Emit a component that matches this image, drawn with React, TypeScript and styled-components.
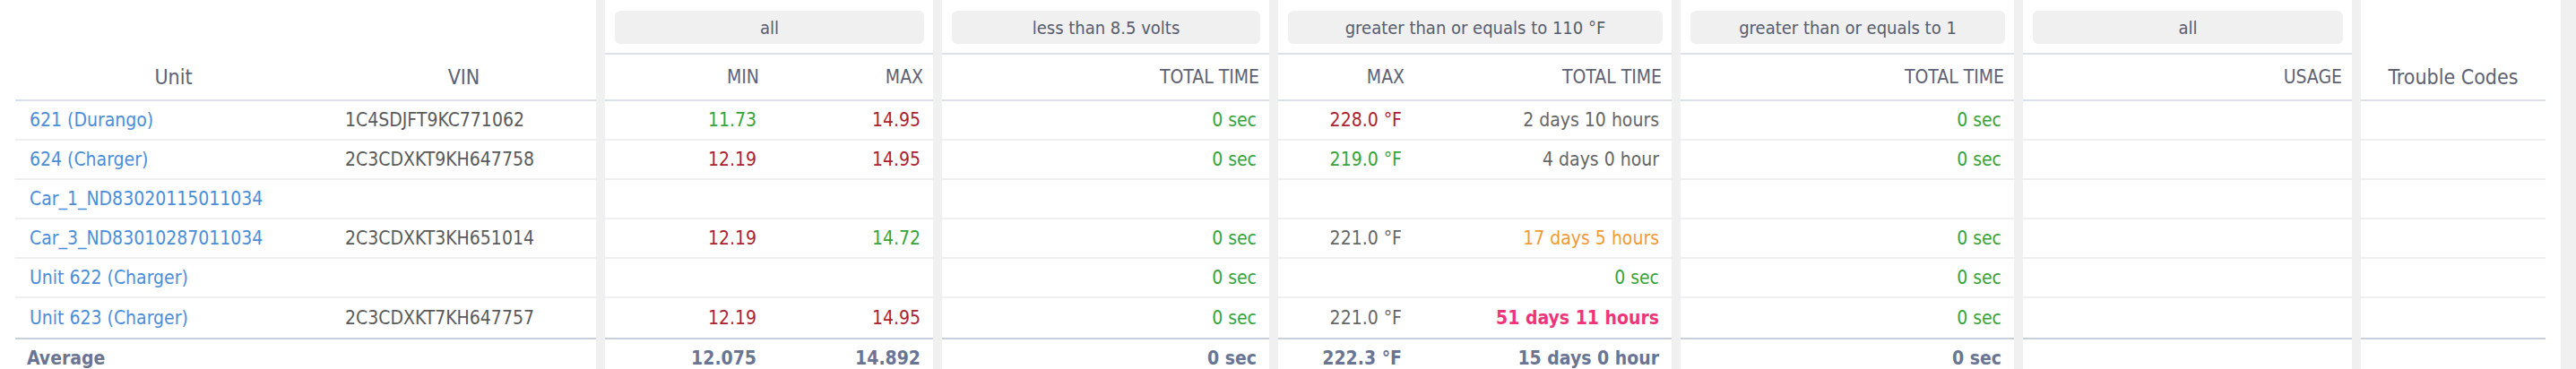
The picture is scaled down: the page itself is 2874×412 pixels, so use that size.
import React from 'react';
import styled, { createGlobalStyle } from 'styled-components';

const GlobalStyle = createGlobalStyle`
  html, body { margin: 0; padding: 0; background: #f0f0f0; }
  body {
    font-family: "DejaVu Sans Condensed", "DejaVu Sans", sans-serif;
    font-stretch: condensed;
    font-size: 21px;
  }
`;

type Tone = 'green' | 'red' | 'gray' | 'orange' | 'pink' | 'avg' | 'plain';
type Align = 'left' | 'right' | 'center';

const toneColor: Record<Tone, string> = {
  green: '#35a43a',
  red: '#ab2330',
  gray: '#666666',
  orange: '#f39a35',
  pink: '#f0347c',
  avg: '#6a7594',
  plain: '#5a5a5a',
};

interface Val {
  t: string;
  tone: Tone;
  bold?: boolean;
  link?: boolean;
}

const v = (t: string, tone: Tone, bold = false): Val => ({ t, tone, bold });

type RowData = Record<string, Val | null>;

const rows: RowData[] = [
  {
    unit: { t: '621 (Durango)', tone: 'plain', link: true },
    vin: v('1C4SDJFT9KC771062', 'plain'),
    min: v('11.73', 'green'),
    max: v('14.95', 'red'),
    low: v('0 sec', 'green'),
    tmax: v('228.0 °F', 'red'),
    ttime: v('2 days 10 hours', 'gray'),
    ge: v('0 sec', 'green'),
  },
  {
    unit: { t: '624 (Charger)', tone: 'plain', link: true },
    vin: v('2C3CDXKT9KH647758', 'plain'),
    min: v('12.19', 'red'),
    max: v('14.95', 'red'),
    low: v('0 sec', 'green'),
    tmax: v('219.0 °F', 'green'),
    ttime: v('4 days 0 hour', 'gray'),
    ge: v('0 sec', 'green'),
  },
  {
    unit: { t: 'Car_1_ND83020115011034', tone: 'plain', link: true },
  },
  {
    unit: { t: 'Car_3_ND83010287011034', tone: 'plain', link: true },
    vin: v('2C3CDXKT3KH651014', 'plain'),
    min: v('12.19', 'red'),
    max: v('14.72', 'green'),
    low: v('0 sec', 'green'),
    tmax: v('221.0 °F', 'gray'),
    ttime: v('17 days 5 hours', 'orange'),
    ge: v('0 sec', 'green'),
  },
  {
    unit: { t: 'Unit 622 (Charger)', tone: 'plain', link: true },
    low: v('0 sec', 'green'),
    ttime: v('0 sec', 'green'),
    ge: v('0 sec', 'green'),
  },
  {
    unit: { t: 'Unit 623 (Charger)', tone: 'plain', link: true },
    vin: v('2C3CDXKT7KH647757', 'plain'),
    min: v('12.19', 'red'),
    max: v('14.95', 'red'),
    low: v('0 sec', 'green'),
    tmax: v('221.0 °F', 'gray'),
    ttime: v('51 days 11 hours', 'pink', true),
    ge: v('0 sec', 'green'),
  },
];

const average: RowData = {
  unit: v('Average', 'avg', true),
  min: v('12.075', 'avg', true),
  max: v('14.892', 'avg', true),
  low: v('0 sec', 'avg', true),
  tmax: v('222.3 °F', 'avg', true),
  ttime: v('15 days 0 hour', 'avg', true),
  ge: v('0 sec', 'avg', true),
};

interface ColSpec {
  key: string;
  title: string;
  w: string;
  headAlign: Align;
  align: Align;
  padL?: number;
  footPadL?: number;
  titleCase?: boolean;
}

interface PanelSpec {
  id: string;
  width: number;
  padL?: number;
  padR?: number;
  filter?: string;
  cols: ColSpec[];
}

const num = (key: string, title: string, w = '1fr'): ColSpec => ({
  key,
  title,
  w,
  headAlign: 'right',
  align: 'right',
});

const panels: PanelSpec[] = [
  {
    id: 'unit',
    width: 665,
    padL: 17,
    cols: [
      { key: 'unit', title: 'Unit', w: '353px', headAlign: 'center', align: 'left', padL: 16, footPadL: 13, titleCase: true },
      { key: 'vin', title: 'VIN', w: '1fr', headAlign: 'center', align: 'left', padL: 15, titleCase: true },
    ],
  },
  { id: 'volt', width: 366, filter: 'all', cols: [num('min', 'MIN'), num('max', 'MAX')] },
  { id: 'low', width: 365, filter: 'less than 8.5 volts', cols: [num('low', 'TOTAL TIME')] },
  {
    id: 'temp',
    width: 439,
    filter: 'greater than or equals to 110 °F',
    cols: [num('tmax', 'MAX', '152px'), num('ttime', 'TOTAL TIME')],
  },
  { id: 'ge', width: 372, filter: 'greater than or equals to 1', cols: [num('ge', 'TOTAL TIME')] },
  { id: 'usage', width: 367, filter: 'all', cols: [num('usage', 'USAGE')] },
  {
    id: 'codes',
    width: 223,
    padR: 17,
    cols: [{ key: 'codes', title: 'Trouble Codes', w: '1fr', headAlign: 'center', align: 'center', titleCase: true }],
  },
];

const Board = styled.div`
  display: flex;
  gap: 10px;
  width: 2857px;
  height: 412px;
  overflow: hidden;
  background: #f0f0f0;
`;

const Panel = styled.section<{ $width: number; $padL: number; $padR: number }>`
  flex: 0 0 ${(p) => p.$width}px;
  box-sizing: border-box;
  padding: 0 ${(p) => p.$padR}px 0 ${(p) => p.$padL}px;
  background: #ffffff;
  display: flex;
  flex-direction: column;
`;

const FilterRow = styled.div<{ $ruled: boolean }>`
  height: 61px;
  flex: 0 0 61px;
  box-sizing: border-box;
  padding: 12px 10px 0 11px;
  border-bottom: 2px solid ${(p) => (p.$ruled ? '#dbe1ea' : 'transparent')};
`;

const FilterButton = styled.button`
  display: block;
  width: 100%;
  height: 37px;
  border: 0;
  border-radius: 6px;
  background: #f0f0f0;
  color: #575d6d;
  font-family: inherit;
  font-stretch: condensed;
  font-size: 20px;
  padding: 0;
  cursor: pointer;
`;

type RowKind = 'head' | 'body' | 'last' | 'foot';

const Row = styled.div<{ $cols: string; $kind: RowKind }>`
  display: grid;
  grid-template-columns: ${(p) => p.$cols};
  box-sizing: border-box;
  flex: 0 0 ${(p) => (p.$kind === 'head' ? 52 : 44)}px;
  height: ${(p) => (p.$kind === 'head' ? 52 : 44)}px;
  border-bottom: ${(p) =>
    p.$kind === 'head' ? '2px solid #dbe1ea' : p.$kind === 'body' ? '2px solid #eef0f4' : '0'};
  border-top: ${(p) => (p.$kind === 'foot' ? '2px solid #c8d0dc' : '0')};
`;

const justify = (a: Align) => (a === 'left' ? 'flex-start' : a === 'right' ? 'flex-end' : 'center');

const Cell = styled.div<{ $align: Align; $padL: number; $padR: number; $tone: Tone; $bold: boolean }>`
  display: flex;
  align-items: center;
  justify-content: ${(p) => justify(p.$align)};
  padding: 0 ${(p) => p.$padR}px 0 ${(p) => p.$padL}px;
  color: ${(p) => toneColor[p.$tone]};
  font-weight: ${(p) => (p.$bold ? 700 : 400)};
  white-space: nowrap;
  overflow: hidden;
`;

const HeadCell = styled.div<{ $align: Align; $padR: number; $big: boolean }>`
  display: flex;
  align-items: center;
  justify-content: ${(p) => justify(p.$align)};
  padding: 0 ${(p) => p.$padR}px 0 0;
  color: #5e6274;
  font-size: ${(p) => (p.$big ? 23 : 21)}px;
  white-space: nowrap;
`;

const UnitLink = styled.a`
  color: #4a8ed9;
  text-decoration: none;
  cursor: pointer;
`;

function renderCell(col: ColSpec, val: Val | null | undefined, foot: boolean) {
  const padL = foot ? col.footPadL ?? col.padL ?? 0 : col.padL ?? 0;
  const padR = col.align === 'right' ? 14 : 0;
  return (
    <Cell
      key={col.key}
      $align={col.align}
      $padL={padL}
      $padR={padR}
      $tone={val ? val.tone : 'plain'}
      $bold={!!val?.bold}
    >
      {val ? val.link ? <UnitLink>{val.t}</UnitLink> : val.t : null}
    </Cell>
  );
}

function TablePanel({ spec }: { spec: PanelSpec }) {
  const cols = spec.cols.map((c) => c.w).join(' ');
  return (
    <Panel $width={spec.width} $padL={spec.padL ?? 0} $padR={spec.padR ?? 0}>
      <FilterRow $ruled={!!spec.filter}>
        {spec.filter ? <FilterButton type="button">{spec.filter}</FilterButton> : null}
      </FilterRow>
      <Row $cols={cols} $kind="head">
        {spec.cols.map((c) => (
          <HeadCell
            key={c.key}
            $align={c.headAlign}
            $padR={c.headAlign === 'right' ? 11 : 0}
            $big={!!c.titleCase}
          >
            {c.title}
          </HeadCell>
        ))}
      </Row>
      {rows.map((r, i) => (
        <Row key={i} $cols={cols} $kind={i === rows.length - 1 ? 'last' : 'body'}>
          {spec.cols.map((c) => renderCell(c, r[c.key], false))}
        </Row>
      ))}
      <Row $cols={cols} $kind="foot">
        {spec.cols.map((c) => renderCell(c, average[c.key], true))}
      </Row>
    </Panel>
  );
}

export default function App() {
  return (
    <>
      <GlobalStyle />
      <Board>
        {panels.map((p) => (
          <TablePanel key={p.id} spec={p} />
        ))}
      </Board>
    </>
  );
}
